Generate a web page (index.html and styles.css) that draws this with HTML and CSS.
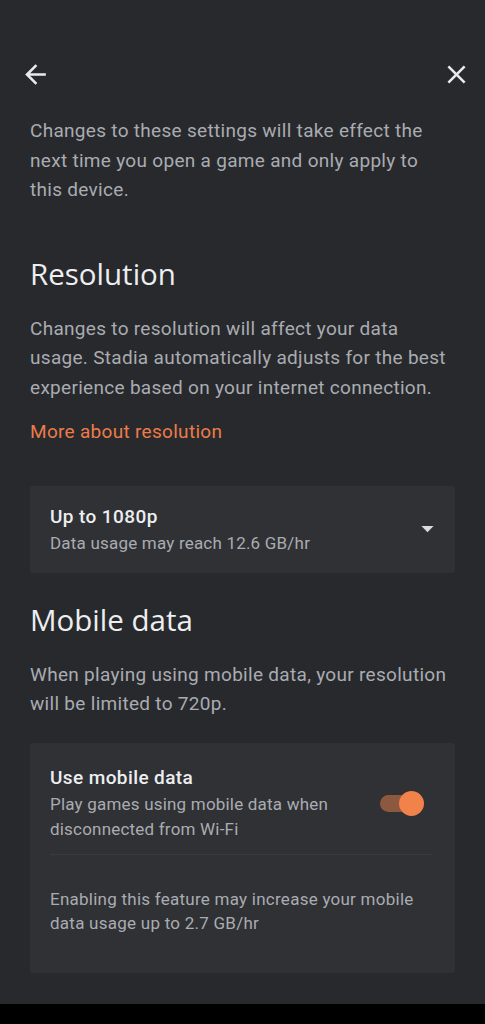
FILE: index.html
```html
<!DOCTYPE html>
<html lang="en">
<head>
<meta charset="utf-8">
<title>Settings</title>
<link rel="stylesheet" href="styles.css">
</head>
<body>
<div class="screen">
  <header class="topbar">
    <svg class="icon" viewBox="0 0 24 24" width="31" height="31"><path d="M20 11H7.83l5.59-5.59L12 4l-8 8 8 8 1.41-1.41L7.83 13H20v-2z" fill="#e8eaed"/></svg>
    <svg class="icon" viewBox="0 0 24 24" width="31" height="31"><path d="M19 6.41L17.59 5 12 10.59 6.41 5 5 6.41 10.59 12 5 17.59 6.41 19 12 13.41 17.59 19 19 17.59 13.41 12z" fill="#e8eaed"/></svg>
  </header>
  <main class="content">
    <p class="body intro">Changes to these settings will take effect the next time you open a game and only apply to this device.</p>

    <h2 class="heading">Resolution</h2>
    <p class="body para">Changes to resolution will affect your data usage. Stadia automatically adjusts for the best experience based on your internet connection.</p>
    <a class="link">More about resolution</a>

    <div class="card select">
      <div class="select-text">
        <div class="card-title">Up to 1080p</div>
        <div class="card-sub">Data usage may reach 12.6 GB/hr</div>
      </div>
      <svg class="caret" viewBox="0 0 24 24" width="29" height="29"><path d="M7 10l5 5 5-5z" fill="#dadce0"/></svg>
    </div>

    <h2 class="heading h-mobile">Mobile data</h2>
    <p class="body para">When playing using mobile data, your resolution will be limited to 720p.</p>

    <div class="card toggle-card">
      <div class="toggle-row">
        <div class="toggle-text">
          <div class="card-title">Use mobile data</div>
          <div class="card-sub sub-wrap">Play games using mobile data when disconnected from Wi-Fi</div>
        </div>
        <div class="switch"><span class="track"></span><span class="thumb"></span></div>
      </div>
      <div class="divider"></div>
      <p class="note">Enabling this feature may increase your mobile data usage up to 2.7 GB/hr</p>
    </div>
  </main>
  <div class="navbar"></div>
</div>
</body>
</html>
```

FILE: styles.css
```css
* { box-sizing: border-box; }
html, body { margin: 0; padding: 0; }
body {
  background: #28292d;
  font-family: Roboto, "Noto Sans", Arial, sans-serif;
  color: #e8eaed;
  width: 485px;
  height: 1024px;
  overflow: hidden;
}
.screen {
  display: flex;
  flex-direction: column;
  height: 1024px;
}
.topbar {
  display: flex;
  justify-content: space-between;
  align-items: center;
  padding: 58.5px 13.5px 0 19.5px;
}
.icon { display: block; }
.content {
  flex: 1;
  padding: 0 30px;
  display: flex;
  flex-direction: column;
}
.body {
  margin: 0;
  font-size: 19px;
  letter-spacing: 0.3px;
  line-height: 29.5px;
  color: #a9acb1;
}
.intro { margin-top: 26.5px; }
.heading {
  margin: 51px 0 0;
  font-family: "Open Sans", Roboto, sans-serif;
  font-weight: 400;
  font-size: 29.5px;
  line-height: 36px;
  color: #eceef0;
  letter-spacing: 0;
}
.h-mobile { margin-top: 29px; }
.para { margin-top: 22px; }
.link {
  margin-top: 14.5px;
  font-size: 19px;
  letter-spacing: 0.3px;
  line-height: 30px;
  color: #ec7c48;
}
.card {
  background: #303135;
  border-radius: 3px;
}
.select {
  margin-top: 39px;
  height: 87px;
  padding: 19px 20px;
  display: flex;
  align-items: center;
  justify-content: space-between;
}
.card-title {
  font-size: 19px;
  letter-spacing: 0.4px;
  line-height: 24px;
  font-weight: 500;
  color: #eceef0;
}
.card-sub {
  margin-top: 3px;
  font-size: 17px;
  letter-spacing: 0.2px;
  line-height: 22px;
  color: #a9acb1;
}
.caret { margin-right: -6.5px; margin-top: -2px; }
.toggle-card {
  margin-top: 24px;
  height: 230px;
  padding: 23px 22px 0 20px;
}
.toggle-row {
  display: flex;
  align-items: flex-start;
  justify-content: space-between;
}
.sub-wrap {
  margin-top: 2.5px;
  line-height: 25px;
  width: 290px;
}
.switch {
  position: relative;
  width: 46px;
  height: 26px;
  margin-top: 25px;
  margin-right: 9px;
}
.track {
  position: absolute;
  left: 2px;
  top: 4.5px;
  width: 36px;
  height: 17px;
  border-radius: 9px;
  background: #8c5840;
}
.thumb {
  position: absolute;
  right: 0;
  top: 0;
  width: 25px;
  height: 25px;
  border-radius: 50%;
  background: #f0824a;
}
.divider {
  height: 1px;
  background: #393a3e;
  margin-top: 12px;
}
.note {
  margin: 32px 0 0;
  font-size: 17px;
  letter-spacing: 0.25px;
  line-height: 24px;
  color: #a9acb1;
}
.navbar {
  height: 20px;
  background: #000;
}
```
